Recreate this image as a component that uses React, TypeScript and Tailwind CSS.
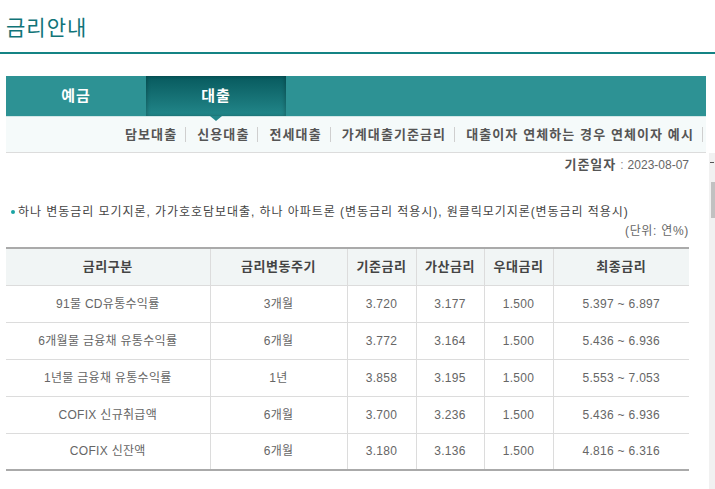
const SUB_MENU = ['담보대출', '신용대출', '전세대출', '가계대출기준금리', '대출이자 연체하는 경우 연체이자 예시'];

const RATES = [
  { name: '91물 CD유통수익률', cycle: '3개월', base: '3.720', add: '3.177', pref: '1.500', final: '5.397 ~ 6.897' },
  { name: '6개월물 금융채 유통수익률', cycle: '6개월', base: '3.772', add: '3.164', pref: '1.500', final: '5.436 ~ 6.936' },
  { name: '1년물 금융채 유통수익률', cycle: '1년', base: '3.858', add: '3.195', pref: '1.500', final: '5.553 ~ 7.053' },
  { name: 'COFIX 신규취급액', cycle: '6개월', base: '3.700', add: '3.236', pref: '1.500', final: '5.436 ~ 6.936' },
  { name: 'COFIX 신잔액', cycle: '6개월', base: '3.180', add: '3.136', pref: '1.500', final: '4.816 ~ 6.316' },
];

export default function App() {
  return (
    <div className="w-[715px] h-[489px] overflow-hidden bg-white font-['Liberation_Sans','Noto_Sans_CJK_KR',sans-serif]">
      {/* title */}
      <div className="h-[54px] flex items-center pl-[6px] border-b-2 border-[#148384]">
        <h1 className="text-[21px] leading-[24px] text-[#117478] tracking-[1px] font-['Noto_Sans_CJK_KR',sans-serif]">금리안내</h1>
      </div>

      {/* tabs */}
      <div className="mt-[22px] ml-[6px] w-[700px] h-[40px] bg-[#2d9294] flex">
        <div className="w-[140px] flex items-center justify-center text-white text-[15px] font-bold tracking-[1px]">예금</div>
        <div className="relative w-[140px] flex items-center justify-center text-white text-[15px] font-bold tracking-[1px] bg-gradient-to-b from-[#075a5e] to-[#22878a] shadow-[inset_2px_0_3px_rgba(0,0,0,0.15),inset_-2px_0_3px_rgba(0,0,0,0.15)]">
          대출
          <span className="absolute left-1/2 -translate-x-1/2 -bottom-[5px] w-0 h-0 border-l-[6px] border-r-[6px] border-t-[5px] border-l-transparent border-r-transparent border-t-[#22878a]" />
        </div>
      </div>

      {/* sub menu */}
      <div className="ml-[6px] w-[700px] h-[37px] bg-[#f5fafa] border-t border-[#d2e7e7] border-b border-b-[#dcdcdc] flex items-center justify-end pr-[3px]">
        {SUB_MENU.map((item, i) => (
          <div key={item} className="flex items-center">
            <span className="text-[13px] leading-[16px] font-bold text-[#555] tracking-[1.1px]">{item}</span>
            <span className={`ml-[8px] w-px h-[15px] bg-[#cfcfcf] ${i < SUB_MENU.length - 1 ? 'mr-[11px]' : ''}`} />
          </div>
        ))}
      </div>

      {/* content + scrollbar */}
      <div className="flex">
        <div className="w-[709px] pl-[6px] pr-[20px]">
          <div className="mt-[4px] h-[16px] flex items-center justify-end text-[12px] leading-[16px]">
            <span className="text-[13px] font-bold text-[#555] tracking-[1px]">기준일자</span>
            <span className="text-[#888] mx-[4px]">:</span>
            <span className="text-[#666]">2023-08-07</span>
          </div>

          <div className="mt-[31px] h-[16px] flex items-center text-[12px] leading-[16px] text-[#444] tracking-[0.95px]">
            <span className="ml-[5px] mr-[3px] w-[4px] h-[4px] rounded-full bg-[#1aa3a3]" />
            하나 변동금리 모기지론, 가가호호담보대출, 하나 아파트론 (변동금리 적용시), 원클릭모기지론(변동금리 적용시)
          </div>
          <div className="mt-[3px] h-[16px] text-right text-[12px] leading-[16px] text-[#666] tracking-[0.7px]">(단위: 연%)</div>

          <table className="mt-[8px] w-[683px] border-collapse table-fixed border-t-2 border-t-[#aaa] border-b-2 border-b-[#aaa]">
            <colgroup>
              <col className="w-[204px]" />
              <col className="w-[137px]" />
              <col className="w-[69px]" />
              <col className="w-[68px]" />
              <col className="w-[69px]" />
              <col className="w-[136px]" />
            </colgroup>
            <thead>
              <tr className="h-[37px] bg-[#f1f5f5]">
                {['금리구분', '금리변동주기', '기준금리', '가산금리', '우대금리', '최종금리'].map((h, i) => (
                  <th key={h} className={`text-[13px] font-bold text-[#444] tracking-[0.5px] border-b border-[#dcdcdc] ${i > 0 ? 'border-l border-l-[#dcdcdc]' : ''}`}>{h}</th>
                ))}
              </tr>
            </thead>
            <tbody>
              {RATES.map((r, idx) => (
                <tr key={r.name} className={`h-[37px] ${idx < RATES.length - 1 ? 'border-b border-[#dcdcdc]' : ''}`}>
                  {[r.name, r.cycle, r.base, r.add, r.pref, r.final].map((v, i) => (
                    <td key={i} className={`text-center text-[12px] text-[#666] tracking-[0.3px] ${i > 0 ? 'border-l border-[#dcdcdc]' : ''}`}>{v}</td>
                  ))}
                </tr>
              ))}
            </tbody>
          </table>
        </div>

        <div className="w-[6px] h-[336px] bg-[#f1f1f1] flex flex-col items-end">
          <span className="mt-[9px] mr-[1px] w-[4px] h-[1px] bg-[#555]" />
          <span className="mt-[19px] w-[4px] h-[36px] bg-[#c1c1c1]" />
        </div>
      </div>
    </div>
  );
}
